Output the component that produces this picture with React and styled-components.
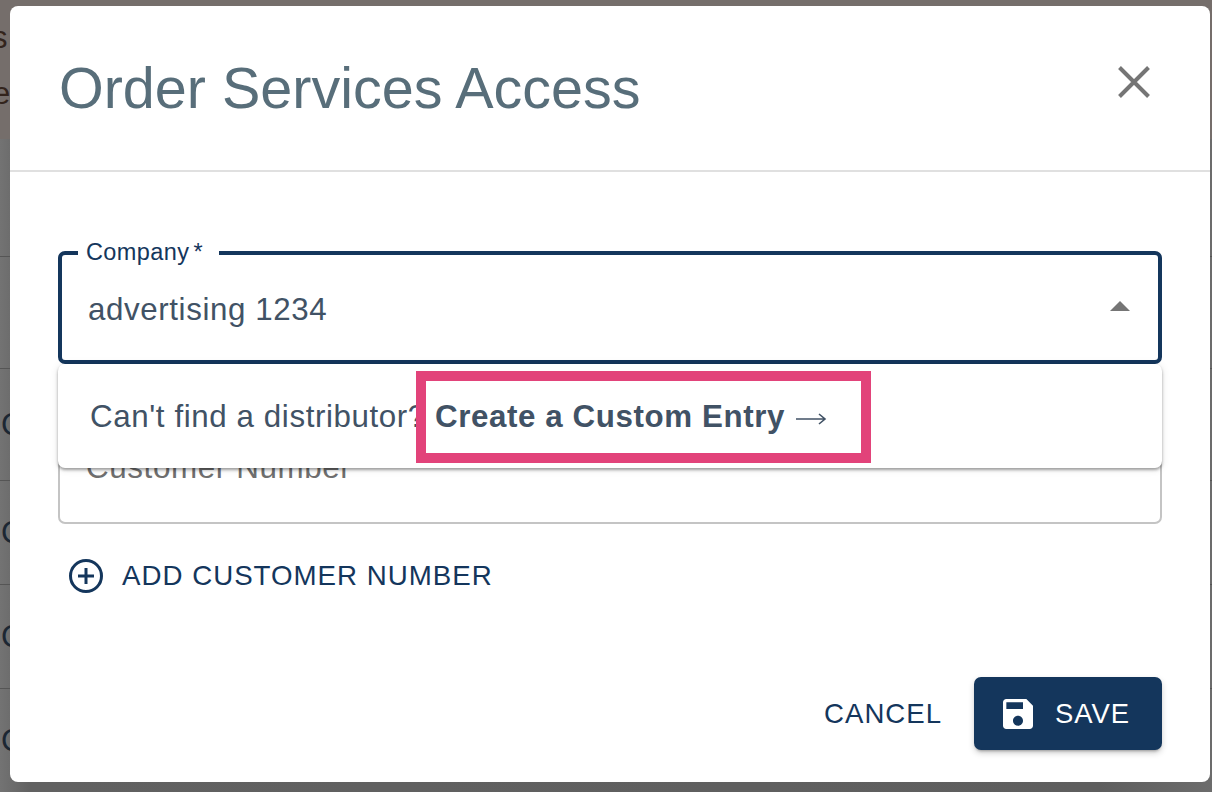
import React from "react";
import styled, { createGlobalStyle } from "styled-components";

const Global = createGlobalStyle`
  html, body { margin: 0; padding: 0; height: 100%; overflow: hidden; }
  body { font-family: "Liberation Sans", Arial, sans-serif; background: #666; }
`;
const Page = styled.div`
  position: relative; width: 1212px; height: 792px; overflow: hidden;
  background: linear-gradient(90deg, #737373 0, #616161 30px, #5e5e5e 1100px, #6c6c6c 1212px);
`;
const TopBand = styled.div`
  height: 139px; background: #756e6b; color: #33241c; font-size: 31px; line-height: 1;
  box-sizing: border-box; overflow: hidden;
`;
const BandLine = styled.div`
  margin-left: ${p => p.$x}px; padding-top: ${p => p.$top}px; height: ${p => p.$h}px; box-sizing: border-box;
`;
const BgRow = styled.div`
  height: ${p => p.$h}px; box-sizing: border-box; border-bottom: 1px solid #555;
  color: #1c2733; font-size: 31px; line-height: 1; display: flex; align-items: center; padding-left: 1px;
`;
const Modal = styled.div`
  position: absolute; left: 10px; top: 6px; width: 1200px; height: 776px; background: #fff;
  border-radius: 8px; display: flex; flex-direction: column; overflow: hidden;
`;
const Header = styled.header`
  height: 166px; box-sizing: border-box; border-bottom: 2px solid #e0e0e0;
  display: flex; align-items: flex-start; justify-content: space-between;
  padding: 49px 52px 0 49px;
`;
const Title = styled.h1`
  margin: 0; font-size: 57.5px; line-height: 66px; font-weight: 400; color: #586e7a;
`;
const CloseBtn = styled.button`
  border: 0; background: none; padding: 0; width: 48px; height: 48px; margin-top: 3px; display: block;
  svg { display: block; }
`;
const Body = styled.div`
  flex: 1; position: relative; padding: 79px 48px 0 48px; display: flex; flex-direction: column;
`;
const Field = styled.fieldset`
  margin: 0; min-width: 0; box-sizing: border-box; height: ${p => p.$h}px; padding: 0;
  border: ${p => p.$focus ? "4px solid #14365c" : "2px solid #c4c4c4"};
  border-radius: 7px; position: relative;
`;
const Legend = styled.legend`
  margin-left: 16px; padding: 0 16px 0 8px; font-size: 23.5px; line-height: 2px; height: 4px; color: #14365c;
  letter-spacing: .4px; white-space: nowrap;
  sup { font-size: 23.5px; line-height: 2px; vertical-align: baseline; margin-left: 4px; }
`;
const Value = styled.div`
  display: flex; align-items: center; justify-content: space-between;
  font-size: 31.3px; line-height: 40px; letter-spacing: .6px; color: #415265;
  padding: 35px 28px 0 26px;
`;
const Caret = styled.span`
  width: 0; height: 0; border-left: 10px solid transparent; border-right: 10px solid transparent;
  border-bottom: 10px solid #757575; margin-top: -9px;
`;
const SecondField = styled(Field)`
  margin-top: 56px; overflow: hidden;
`;
const Placeholder = styled.div`
  font-size: 31.4px; letter-spacing: .6px; line-height: 40px; color: #6f6f6f; padding: 26px 0 0 26px;
`;
const Popup = styled.div`
  position: absolute; left: 48px; top: 192px; width: 1104px; height: 104px; background: #fff; border-radius: 7px;
  box-shadow: 0 2px 3px rgba(0,0,0,.35), 0 1px 8px rgba(0,0,0,.1);
  display: flex; align-items: center; padding: 2px 0 0 32px; box-sizing: border-box;
  font-size: 31.3px; color: #415265; letter-spacing: .6px; white-space: nowrap;
`;
const Highlight = styled.span`
  position: absolute; left: 358px; top: 7px; width: 455px; height: 92px; box-sizing: border-box;
  border: 10px solid #e2437a; background: #fff; display: flex; align-items: center; padding-left: 9px;
`;
const Strong = styled.strong`
  font-weight: 700; font-size: 31.3px; letter-spacing: .6px;
`;
const Arrow = styled.svg`
  margin-left: 10px; margin-top: 4px; display: block;
`;
const AddRow = styled.button`
  display: flex; align-items: center; gap: 18px; margin: 34px 0 0 10px; padding: 0; border: 0; background: none;
  font: inherit; font-size: 27.7px; letter-spacing: 1px; color: #14365c;
  svg { display: block; }
`;
const Footer = styled.footer`
  position: absolute; right: 48px; bottom: 32px; display: flex; align-items: center; gap: 32px;
`;
const TextBtn = styled.button`
  border: 0; background: none; padding: 0; font: inherit; font-size: 27.6px; letter-spacing: 1px; color: #14365c;
`;
const SaveBtn = styled.button`
  width: 188px; height: 73px; box-sizing: border-box; border: 0; border-radius: 7px; background: #14365c; color: #fff;
  display: flex; align-items: center; gap: 22px; padding: 0 0 0 29px; font: inherit; font-size: 27.4px; letter-spacing: 1px;
  box-shadow: 0 3px 3px -2px rgba(0,0,0,.3), 0 3px 6px rgba(0,0,0,.18);
  svg { display: block; }
`;

export default function App() {
  return (
    <Page>
      <Global />
      <TopBand>
        <BandLine $x={-8} $top={22} $h={78}>s</BandLine>
        <BandLine $x={-7} $top={-4} $h={40}>e</BandLine>
      </TopBand>
      <BgRow $h={118} />
      <BgRow $h={112} />
      <BgRow $h={112}>C</BgRow>
      <BgRow $h={104}>C</BgRow>
      <BgRow $h={104}>C</BgRow>
      <BgRow $h={104}>C</BgRow>
      <Modal>
        <Header>
          <Title>Order Services Access</Title>
          <CloseBtn aria-label="Close">
            <svg width="48" height="48" viewBox="0 0 48 48"><path d="M9.5 9.5 L38.5 38.5 M38.5 9.5 L9.5 38.5" stroke="#757575" strokeWidth="4" fill="none" /></svg>
          </CloseBtn>
        </Header>
        <Body>
          <Field $focus $h={113}>
            <Legend>Company<sup>*</sup></Legend>
            <Value>advertising 1234<Caret /></Value>
          </Field>
          <SecondField $h={104}>
            <Placeholder>Customer Number</Placeholder>
          </SecondField>
          <AddRow>
            <svg width="36" height="36" viewBox="0 0 36 36" fill="none" stroke="#14365c" strokeWidth="3"><circle cx="18" cy="18" r="15.5" /><path d="M18 10v16M10 18h16" /></svg>
            ADD CUSTOMER NUMBER
          </AddRow>
          <Popup>
            Can't find a distributor?
            <Highlight>
              <Strong>Create a Custom Entry</Strong>
              <Arrow width="32" height="16" viewBox="0 0 32 16" fill="none" stroke="#415265" strokeWidth="1.6"><path d="M1 8h29M24 3l6 5-6 5" /></Arrow>
            </Highlight>
          </Popup>
          <Footer>
            <TextBtn>CANCEL</TextBtn>
            <SaveBtn>
              <svg width="30" height="30" viewBox="3 3 18 18" fill="#fff"><path d="M17 3H5c-1.11 0-2 .9-2 2v14c0 1.1.89 2 2 2h14c1.1 0 2-.9 2-2V7l-4-4zm-5 16c-1.66 0-3-1.34-3-3s1.34-3 3-3 3 1.34 3 3-1.34 3-3 3zm3-10H5V5h10v4z" /></svg>
              SAVE
            </SaveBtn>
          </Footer>
        </Body>
      </Modal>
    </Page>
  );
}
